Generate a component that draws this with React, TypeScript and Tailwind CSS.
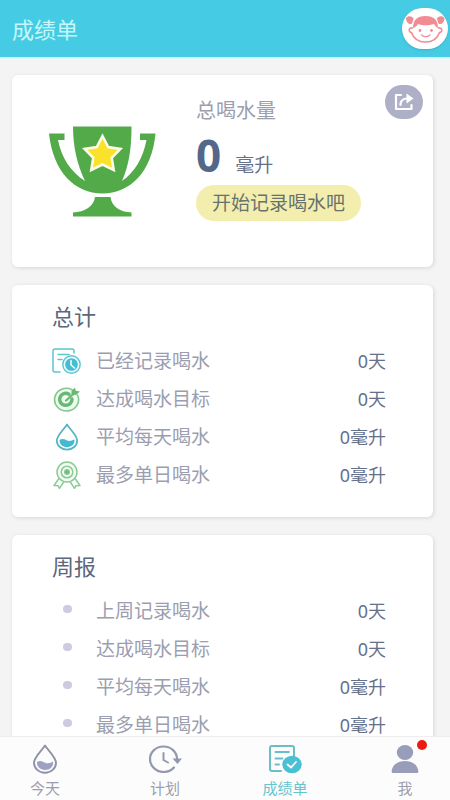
import type { ReactNode } from 'react'

interface Stat {
  label: string
  value: string
  icon: ReactNode
}

function AvatarIcon() {
  return (
    <svg viewBox="0 0 46 41" className="h-[41px] w-[46px]" fill="none" aria-hidden="true">
      <g fill="#f28c93">
        <path d="M4 10c2-2.500 6-2 7.500.5-.5 3-1 4-2 5.500-3 .5-5.500-2-5.500-6zM42.500 10c-2-2.500-6-2-7.500.5.5 3 1 4 2 5.500 3 .5 5.500-2 5.500-6z" />
        <path d="M11 20c0-8 4-12 12.500-12S36 12 36 20c-2-1-3-2.500-4-4-5 1.500-11 2-16 0-1 2-3 3.500-5 4z" />
        <circle cx="18" cy="22.500" r="1.400" />
        <circle cx="29.500" cy="22.500" r="1.400" />
      </g>
      <path d="M11 20c-4.500-1-5 4-1.500 4.500 2 6 7 9.500 14 9.500s12-3.500 14-9.500c3.500-.5 3-5.500-1.500-4.500" stroke="#f28c93" strokeWidth="1.600" />
      <path d="M19.500 27c2.500 2 6 2 8.500 0" stroke="#f28c93" strokeWidth="1.300" strokeLinecap="round" />
    </svg>
  )
}

function ShareIcon() {
  return (
    <svg viewBox="0 0 20 18" className="h-[18px] w-5" fill="none" aria-hidden="true">
      <path d="M7 2H2v14h15.500v-4" stroke="#fff" strokeWidth="2.200" strokeLinejoin="round" strokeLinecap="round" />
      <path d="M6.500 12c0-4.500 2.500-6.500 7-6.500" stroke="#fff" strokeWidth="2.200" strokeLinecap="round" />
      <path d="M12.500 0.500L19.500 5.500L12.500 10.500z" fill="#fff" />
    </svg>
  )
}

function Trophy() {
  return (
    <svg viewBox="49 126 107 91" className="h-[91px] w-[107px]" aria-hidden="true">
      <g fill="#52ab48">
        <path d="M73 126.500h58.500c0 20-2 38-9.500 54.500 13-9 21-23 24.500-41H140v-6.500h15.500C152 172 130 193.500 102.500 193.500S53 172 49 133.500h15.500v6.500H58c3.500 18 13 32 27 41-8-16.500-12-34.500-12-54.500z" />
        <path d="M95 197h15.500c1 9 9 15 21 15.500v4H73v-4c12-.5 21-6.500 22-15.500z" />
      </g>
      <path
        d="M102.500 136l5.700 11 12.200 2-8.700 8.800 2 12.200-11.200-5.500-11.200 5.500 2-12.200-8.700-8.800 12.200-2z"
        fill="#f9e229"
        stroke="#fbfbe8"
        strokeWidth="2.600"
      />
    </svg>
  )
}

function RecordIcon() {
  return (
    <svg viewBox="0 0 30 26" className="h-[26px] w-[30px]" fill="none" strokeLinecap="round" aria-hidden="true">
      <path d="M8 24H3a2 2 0 0 1-2-2V3a2 2 0 0 1 2-2h17a2 2 0 0 1 2 2v2M6 6.500h11M6 11.500h4" stroke="#5cc3d3" strokeWidth="1.500" />
      <circle cx="19.500" cy="16.500" r="8.700" fill="#e6fafd" stroke="#5cc3d3" strokeWidth="1.400" />
      <circle cx="19.500" cy="16.500" r="6.300" fill="#42bdd2" />
      <path d="M19 12.500v4.500l3.500 3" stroke="#fff" strokeWidth="1.500" />
    </svg>
  )
}

function TargetIcon() {
  return (
    <svg viewBox="0 0 28 25" className="h-[25px] w-7" fill="none" strokeLinecap="round" aria-hidden="true">
      <path d="M19 2.600A12 11.300 0 1 0 24.500 8" fill="#effaf0" stroke="#83c78b" strokeWidth="1.600" />
      <path d="M16 7.200A6.200 6 0 1 0 19 12" stroke="#68b974" strokeWidth="3.500" />
      <path d="M13 13.500L21 6.500" stroke="#68b974" strokeWidth="2.200" />
      <path d="M18.500 7V3.500L22 .8l.8 3 4.200.7-4 3.500z" fill="#68b974" />
    </svg>
  )
}

function DropIcon({ stroke, fill, className }: { stroke: string; fill: string; className: string }) {
  return (
    <svg viewBox="0 0 26 30" className={className} fill="none" aria-hidden="true">
      <path d="M13 1.500C10 6.500 2 13 2 19a11 9.700 0 0 0 22 0C24 13 16 6.500 13 1.500z" stroke={stroke} strokeWidth="1.900" strokeLinejoin="round" />
      <path d="M5 18c2.500-1.500 5-1 7.500.5s5.500 1 8.500-1c1 5-3 8.500-8 8.500s-8.500-3.500-8-8z" fill={fill} />
    </svg>
  )
}

function MedalIcon() {
  return (
    <svg viewBox="0 0 30 28" className="h-7 w-[30px]" fill="none" stroke="#8acb93" strokeWidth="1.500" strokeLinejoin="round" aria-hidden="true">
      <path d="M7 17.500L2 24.500l4 .2 1.500 2.600L12 20.500M23 17.500l5 7-4 .2-1.500 2.600L18 20.500" />
      <circle cx="15" cy="11" r="10" fill="#f1fbf2" />
      <circle cx="15" cy="11" r="5.800" />
      <circle cx="15" cy="11" r="2.300" fill="#68b974" />
    </svg>
  )
}

function ClockIcon() {
  return (
    <svg viewBox="0 0 34 28" className="h-7 w-[34px]" fill="none" strokeLinecap="round" aria-hidden="true">
      <path d="M26 22.500C23.500 25.500 19.500 27 15.500 27 8 27 2 21 2 14S8 1.500 15.500 1.500 29 7 29 14" stroke="#9498ae" strokeWidth="2.200" />
      <path d="M15.500 8v7l4.500 2.500" stroke="#9498ae" strokeWidth="2" />
      <path d="M24.500 13.500H34l-4.500 5.500z" fill="#9498ae" />
    </svg>
  )
}

function ReportIcon() {
  return (
    <svg viewBox="0 0 34 30" className="h-[30px] w-[34px]" fill="none" strokeLinecap="round" aria-hidden="true">
      <path d="M13 27H4a2 2 0 0 1-2-2V4a2 2 0 0 1 2-2h20a2 2 0 0 1 2 2v8" stroke="#68bfc5" strokeWidth="2" />
      <path d="M7.500 8H21M7.500 14.500h7M7.500 20.500H11" stroke="#68bfc5" strokeWidth="1.800" />
      <ellipse cx="24" cy="20.500" rx="9.700" ry="8.800" fill="#49c0d3" />
      <path d="M19.500 20.500l3.500 3 5-5.500" stroke="#fff" strokeWidth="1.700" />
    </svg>
  )
}

function PersonIcon() {
  return (
    <svg viewBox="0 0 28 28" className="h-7 w-7" fill="#989db9" aria-hidden="true">
      <ellipse cx="14" cy="7.500" rx="8.200" ry="7.500" />
      <path d="M2 28c-1 0-1.500-.8-1.300-2C1.500 19.500 7 16 14 16s12.500 3.500 13.300 10c.2 1.200-.3 2-1.300 2z" />
    </svg>
  )
}

const dot = <span className="mb-1 h-2 w-[9px] rounded-full bg-[#cccbdf]" />

const totals: Stat[] = [
  { label: '已经记录喝水', value: '0天', icon: <RecordIcon /> },
  { label: '达成喝水目标', value: '0天', icon: <TargetIcon /> },
  { label: '平均每天喝水', value: '0毫升', icon: <DropIcon stroke="#55b5c4" fill="#43bad0" className="h-7 w-6" /> },
  { label: '最多单日喝水', value: '0毫升', icon: <MedalIcon /> },
]

const weekly: Stat[] = [
  { label: '上周记录喝水', value: '0天', icon: dot },
  { label: '达成喝水目标', value: '0天', icon: dot },
  { label: '平均每天喝水', value: '0毫升', icon: dot },
  { label: '最多单日喝水', value: '0毫升', icon: dot },
]

const tabs = [
  { label: '今天', icon: <DropIcon stroke="#8f93a8" fill="#9da2c5" className="h-[30px] w-[26px]" />, active: false, badge: false },
  { label: '计划', icon: <ClockIcon />, active: false, badge: false },
  { label: '成绩单', icon: <ReportIcon />, active: true, badge: false },
  { label: '我', icon: <PersonIcon />, active: false, badge: true },
]

function StatCard({ title, stats }: { title: string; stats: Stat[] }) {
  return (
    <section className="rounded-md bg-white pt-[15px] pr-[47px] pb-[23px] pl-10 shadow-[1px_1px_4px_rgba(0,0,0,0.12)]">
      <h2 className="mb-2.5 text-[22px] leading-8 text-[#5b677b]">{title}</h2>
      <dl>
        {stats.map((stat) => (
          <div key={stat.label} className="flex h-[38px] items-center">
            <dt className="flex items-center gap-3.5 text-[19px] leading-7 text-[#9b9eb1]">
              <span className="flex w-[30px] justify-center">{stat.icon}</span>
              {stat.label}
            </dt>
            <dd className="ml-auto text-[18px] leading-7 text-[#65718a]">{stat.value}</dd>
          </div>
        ))}
      </dl>
    </section>
  )
}

export default function App() {
  return (
    <div className="flex h-screen flex-col bg-[#f4f4f5] font-['Noto_Sans','Noto_Sans_CJK_SC',sans-serif]">
      <header className="flex h-[59px] shrink-0 items-center justify-between border-b-2 border-[#d9f7f9] bg-[#45cce4] pr-0.5 pl-3">
        <h1 className="text-[22px] leading-8 text-[#c5f7fb]">成绩单</h1>
        <button type="button" aria-label="头像" className="rounded-full bg-white shadow-sm">
          <AvatarIcon />
        </button>
      </header>

      <main className="flex-1 space-y-[18px] overflow-y-auto pt-4 pr-[17px] pb-4 pl-3 [scrollbar-width:none]">
        <section className="relative flex h-48 items-center rounded-md bg-white pl-[37px] shadow-[1px_1px_4px_rgba(0,0,0,0.12)]">
          <Trophy />
          <div className="mb-6 ml-10">
            <p className="h-7 text-[20px] leading-7 text-[#9c9eae]">总喝水量</p>
            <p className="flex h-[60px] items-baseline gap-3.5 text-[19px] text-[#65718a]">
              <span className="text-[44px] leading-[60px] font-bold text-[#536889]">0</span>
              <span className="leading-7">毫升</span>
            </p>
            <button type="button" className="h-9 rounded-full bg-[#f3eeae] px-4 text-[19px] leading-7 text-[#67726f]">
              开始记录喝水吧
            </button>
          </div>
          <button
            type="button"
            aria-label="分享"
            className="absolute top-2.5 right-2.5 flex h-[34px] w-[38px] items-center justify-center rounded-full bg-[#aeb0c8]"
          >
            <ShareIcon />
          </button>
        </section>

        <StatCard title="总计" stats={totals} />
        <StatCard title="周报" stats={weekly} />
      </main>

      <nav className="h-16 shrink-0 border-t border-[#eeeeef] bg-[#fcfcfc]">
        <ul className="flex h-full justify-between px-[21px]">
          {tabs.map((tab) => (
            <li key={tab.label} className="w-12">
              <a
                href="#"
                className={`flex h-full flex-col items-center gap-1 pt-[7px] text-[15px] leading-5 ${tab.active ? 'text-[#65c5cf]' : 'text-[#9c9eae]'}`}
              >
                <span className="relative flex h-[30px] items-center">
                  {tab.icon}
                  {tab.badge && <span className="absolute -top-1 -right-2 size-2.5 rounded-full bg-[#ee1a12]" />}
                </span>
                {tab.label}
              </a>
            </li>
          ))}
        </ul>
      </nav>
    </div>
  )
}
